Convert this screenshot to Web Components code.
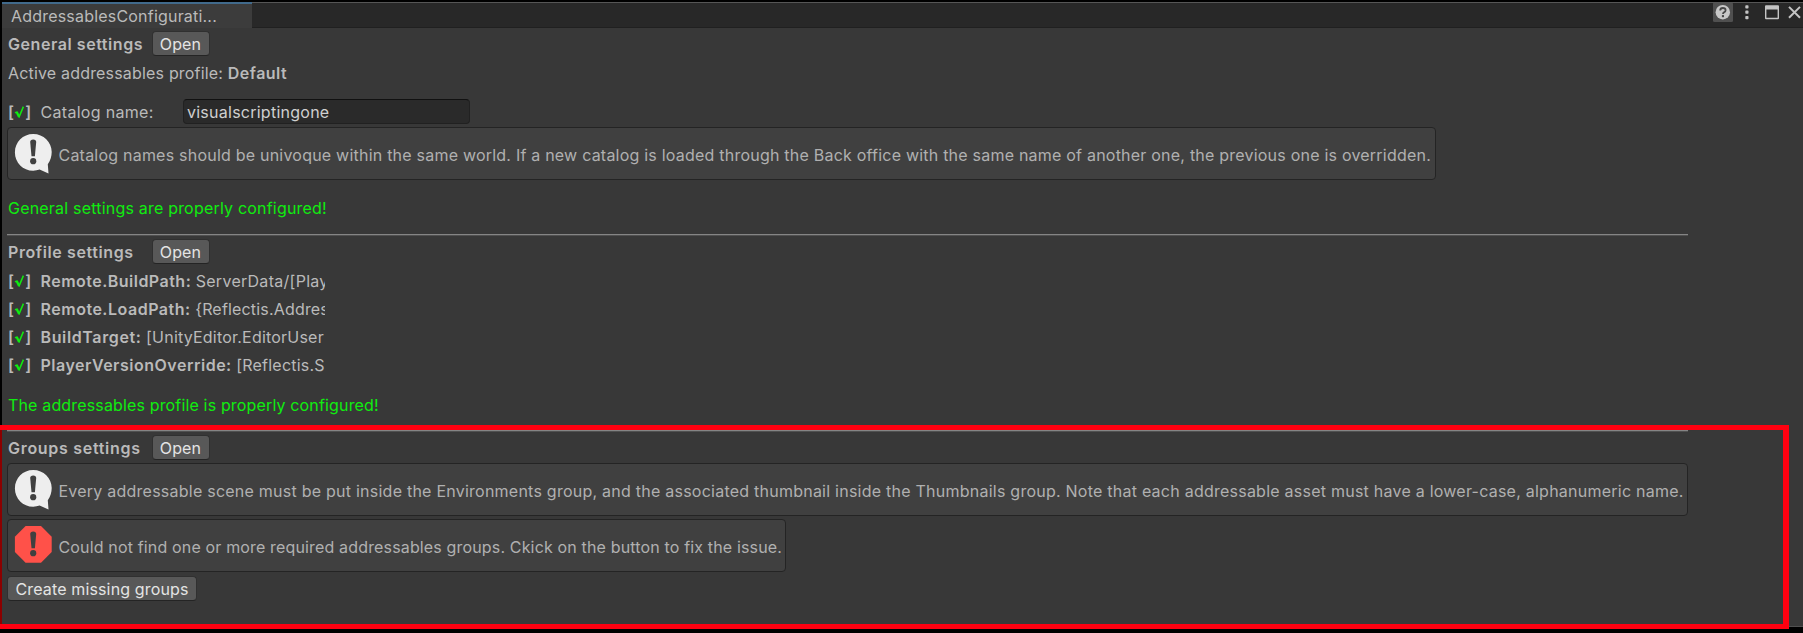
<!DOCTYPE html>
<html lang="en">
<head>
<meta charset="utf-8">
<title>AddressablesConfiguration</title>
<style>
html,body{margin:0;height:100%;background:#000;overflow:hidden}
body{font:16px/20px Inter,"Liberation Sans",sans-serif;color:#bababa}
</style>
</head>
<body>
<editor-window></editor-window>
<script>
const define = (name, html, setup) => customElements.define(name, class extends HTMLElement {
  constructor() {
    super();
    const t = document.createElement('template');
    t.innerHTML = html;
    this.attachShadow({ mode: 'open' }).append(t.content.cloneNode(true));
  }
  connectedCallback() { if (setup) setup(this, this.shadowRoot); }
});

// Text run with its own tracking; "b" makes it bold.
define('ui-label', `<style>
  :host{display:block;white-space:pre;flex:none}
  :host([b]){font-weight:600}
  :host([ok]){color:#10ec10}
</style><slot></slot>`, el => { el.style.letterSpacing = (el.getAttribute('ls') || 0.18) + 'px'; });

define('ui-button', `<style>
  :host{display:flex;box-sizing:border-box;width:58px;height:25px;flex:none;align-items:center;justify-content:center;
    background:#585858;border:1px solid #303030;border-bottom-color:#242424;border-radius:4px;color:#e4e4e4;letter-spacing:.14px;white-space:nowrap}
  :host([wide]){width:190px}
</style><slot></slot>`);

define('ui-row', `<style>
  :host{display:flex;align-items:center;box-sizing:border-box;height:28px;padding-left:1px}
</style><slot></slot>`);

define('section-head', `<style>
  :host{display:flex;align-items:center;height:25px;padding-left:1px}
  .title{width:143.5px;flex:none}
</style><div class="title"><slot></slot></div><ui-button>Open</ui-button>`);

define('check-mark', `<style>
  :host{display:flex;align-items:center;width:32.5px;height:20px;flex:none;font-weight:600}
  svg{width:11px;height:14px;flex:none;margin:0 .2px 0 0}
  span{width:6px;text-align:center}
</style><span>[</span><svg viewBox="0 0 11 14" fill="none" stroke="#10ec10"><path d="M1 7.8L2.8 6.8" stroke-width="1.4"/><path d="M2.6 6.8L5 11.8" stroke-width="2.3"/><path d="M4.8 12.6L9.4 1.6" stroke-width="1.5"/></svg><span>]</span>`);

define('ui-field', `<style>
  :host{display:flex;align-items:center;box-sizing:border-box;width:287px;height:25px;background:#2a2a2a;border:1px solid #212121;
    border-top-color:#111;border-radius:4px;padding:1px 0 0 3px;color:#d0d0d0;letter-spacing:.25px}
</style><slot></slot>`);

define('help-box', `<style>
  :host{display:flex;align-items:center;box-sizing:border-box;width:var(--w);height:53px;background:#404040;border:1px solid #242424;border-radius:4px;padding-left:6px;color:#b0b0b0}
  svg{width:40px;height:42px;flex:none;margin:3px 4.5px 0 0}
  ui-label{padding-top:3px}
  .err{display:none}
  :host([error]) .err{display:block}
  :host([error]) .info{display:none}
</style>
<svg class="info" viewBox="0 0 40 42"><path d="M19.2 0C29.5 0 37.7 8 37.7 18C37.7 22.5 36.3 26.7 33.8 30.2L34.5 39.5L25.6 35.6C23.6 36.3 21.5 36.7 19.2 36.7C9 36.7 .9 28.5 .9 18.4C.9 8 9 0 19.2 0Z" fill="#eee"/><path d="M16.2 8Q16.2 5.5 19.2 5.5Q22.2 5.5 22.2 8L20.9 22.3H17.5Z" fill="#404040"/><circle cx="19.2" cy="27.2" r="3.1" fill="#404040"/></svg>
<svg class="err" viewBox="0 0 40 42"><path d="M11.6 0H27L37.7 10.7V26L27 36.8H11.6L.9 26V10.7Z" fill="#ff5149"/><path d="M16.2 8Q16.2 5.5 19.2 5.5Q22.2 5.5 22.2 8L20.9 22.3H17.5Z" fill="#404040"/><circle cx="19.2" cy="27.2" r="3.1" fill="#404040"/></svg>
<ui-label><slot></slot></ui-label>`, (el, r) => { r.querySelector('ui-label').style.letterSpacing = el.getAttribute('ls') + 'px'; });

// One profile variable; the value is clipped at the column's edge.
define('profile-var', `<style>
  :host{display:flex;align-items:center;height:28px;box-sizing:border-box;width:318px;padding-left:1px;overflow:hidden}
  ::slotted(ui-label[b]){margin-right:4.5px}
</style><check-mark></check-mark><slot></slot>`);

define('ui-rule', `<style>
  :host{display:block;width:1681px;height:1px;background:#858585;border-bottom:1px solid #505050}
</style>`);

define('tab-bar', `<style>
  :host{display:flex;box-sizing:border-box;height:26px;background:#282828;border-top:1px solid #565656;justify-content:space-between}
  .tab{box-sizing:border-box;width:250px;margin-top:-1px;padding:2.4px 0 0 9px;background:#3c3c3c;border-top:2px solid #416a8c;height:26px}
  .edge{flex:1;border-bottom:1px solid #202020;display:flex;justify-content:flex-end}
  svg{width:96px;height:24px;display:block}
</style>
<div class="tab"><ui-label ls=".2">AddressablesConfigurati...</ui-label></div>
<div class="edge"><svg viewBox="1707 3 96 24">
  <rect x="1713" y="2.6" width="20" height="19.4" rx="1.5" fill="#505050"/>
  <circle cx="1722.8" cy="12.2" r="7.2" fill="#c8c8c8"/>
  <path d="M1720.2 10.5Q1720.2 8 1722.8 8Q1725.6 8 1725.6 10.3Q1725.6 11.7 1724 12.4Q1723 12.9 1723 14" fill="none" stroke="#484848" stroke-width="1.8"/><rect x="1721.9" y="15.1" width="2.1" height="2.1" fill="#484848"/>
  <g fill="#c4c4c4"><rect x="1745.3" y="5.3" width="3.2" height="3.2" rx=".8"/><rect x="1745.3" y="10.6" width="3.2" height="3.2" rx=".8"/><rect x="1745.3" y="16" width="3.2" height="3.2" rx=".8"/>
  <path fill-rule="evenodd" d="M1766 5.2h12q1 0 1 1v12q0 1-1 1h-12q-1 0-1-1v-12q0-1 1-1zM1766.4 9.5v8.3h11.2v-8.3z"/></g>
  <path d="M1789 6.9L1800 17.7M1800 6.9L1789 17.7" stroke="#c4c4c4" stroke-width="2"/>
</svg></div>`);

// Red outline laid over the groups section.
define('highlight-frame', `<style>
  :host{position:absolute;left:0;top:425px;width:1789px;height:204px;box-sizing:border-box;border:5px solid #ff0010;border-width:5px 6px 5px 0;pointer-events:none}
  i{display:block;width:2px;height:194px;background:#8c0000}
</style><i></i>`);

define('editor-window', `<style>
  :host{display:block;position:relative;height:633px;background:#000;overflow:hidden}
  .win{margin-left:2px;height:625px;margin-top:2px;background:#383838;box-sizing:border-box;border-bottom:1px solid #505050}
  :host{display:flow-root}
  main{display:flex;flex-direction:column;padding:3px 0 0 5px}
  .name{width:142.5px}
</style>
<div class="win">
<tab-bar></tab-bar>
<main>
  <section-head><ui-label b ls=".56">General settings</ui-label></section-head>
  <ui-row style="height:34px"><ui-label ls=".18">Active addressables profile: </ui-label><ui-label b ls=".48">Default</ui-label></ui-row>
  <ui-row style="height:25px;margin-top:9px"><check-mark></check-mark><div class="name"><ui-label ls=".3" style="padding-top:1px">Catalog name:</ui-label></div><ui-field>visualscriptingone</ui-field></ui-row>
  <help-box ls=".219" style="--w:1429px;margin-top:3px">Catalog names should be univoque within the same world. If a new catalog is loaded through the Back office with the same name of another one, the previous one is overridden.</help-box>
  <ui-row style="height:54px"><ui-label ok ls=".2" style="padding-top:2px">General settings are properly configured!</ui-label></ui-row>
  <ui-rule></ui-rule>
  <section-head style="margin-top:3px"><ui-label b ls=".6">Profile settings</ui-label></section-head>
  <profile-var style="margin-top:3px"><ui-label b ls=".48">Remote.BuildPath:</ui-label><ui-label ls=".28">ServerData/[PlayerVersionOverride]</ui-label></profile-var>
  <profile-var><ui-label b ls=".51">Remote.LoadPath:</ui-label><ui-label>{Reflectis.AddressablesLoadPath}</ui-label></profile-var>
  <profile-var><ui-label b ls=".63">BuildTarget:</ui-label><ui-label ls=".21">[UnityEditor.EditorUser</ui-label></profile-var>
  <profile-var><ui-label b ls=".51">PlayerVersionOverride:</ui-label><ui-label ls=".22">[Reflectis.S</ui-label></profile-var>
  <ui-row style="height:51px"><ui-label ok ls=".155">The addressables profile is properly configured!</ui-label></ui-row>
  <ui-rule></ui-rule>
  <section-head style="margin-top:3px"><ui-label b ls=".7">Groups settings</ui-label></section-head>
  <help-box ls=".239" style="--w:1681px;margin-top:3px">Every addressable scene must be put inside the Environments group, and the associated thumbnail inside the Thumbnails group. Note that each addressable asset must have a lower-case, alphanumeric name.</help-box>
  <help-box error ls=".155" style="--w:779px;margin-top:3px">Could not find one or more required addressables groups. Ckick on the button to fix the issue.</help-box>
  <ui-button wide style="margin-top:4px">Create missing groups</ui-button>
</main>
</div>
<highlight-frame></highlight-frame>`);
</script>
</body>
</html>
